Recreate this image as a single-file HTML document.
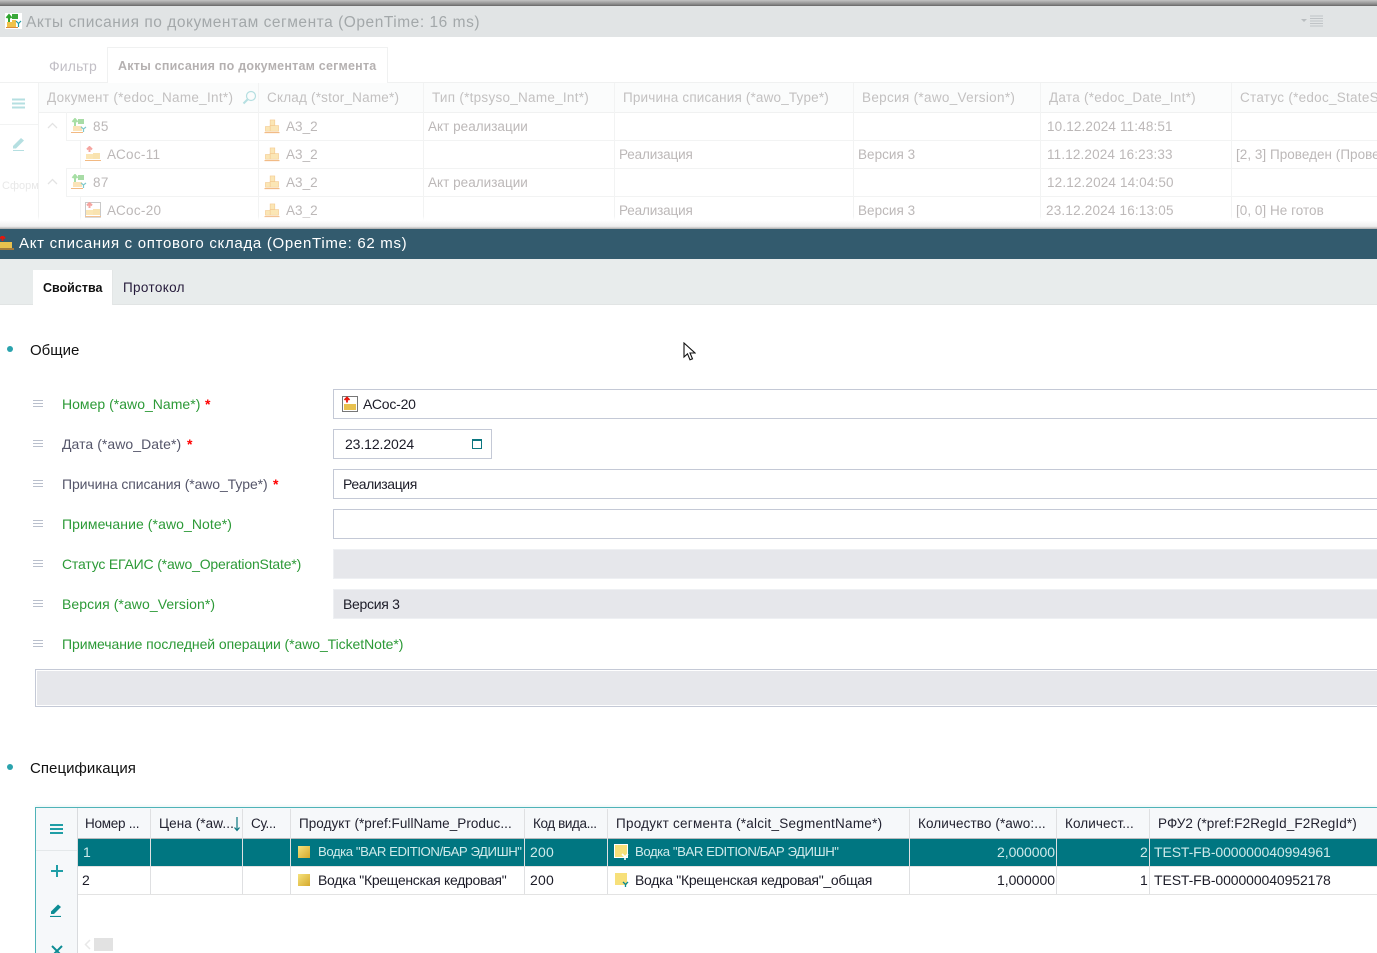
<!DOCTYPE html>
<html lang="ru"><head><meta charset="utf-8"><title>Акт списания</title>
<style>
html,body{margin:0;padding:0;background:#fff}
#p{position:relative;width:1377px;height:953px;overflow:hidden;background:#fff;font-family:"Liberation Sans","DejaVu Sans",sans-serif;font-size:14px;color:#1c1c28}
#p div,#p svg{position:absolute}
.t{white-space:nowrap;line-height:18px;height:18px}
.f{color:#bcb8b8;font-size:13.5px;letter-spacing:.03px}
.fh{color:#c3c1c1;font-size:13.5px;letter-spacing:.27px}
.l{font-size:14px}
.g{color:#2c9a37}.d{color:#55566a}
.s{color:#f00;font-weight:bold;font-size:14px}
.v{border:1px solid #c4c9d6;height:28px;left:333px;width:1060px;box-sizing:content-box}
.h{font-size:13.5px;letter-spacing:.1px;color:#222230}
.c{font-size:14px;letter-spacing:-.3px}
.w{color:#cfeaea}
.hl{background:#b9bfcc;left:33px;width:10px;height:1px}
</style></head><body><div id="p">
<svg width="0" height="0"><defs>
<symbol id="wh" viewBox="0 0 16 16"><rect x="6" y="1" width="5" height="6" fill="#fbe6b5" stroke="#f3c78c" stroke-width=".6"/><rect x="6" y="7" width="9" height="6" fill="#fbe6b5" stroke="#f3c78c" stroke-width=".6"/><rect x="1" y="8" width="5" height="5" fill="#fbe6b5" stroke="#f3c78c" stroke-width=".6"/><path d="M0 14.5H16" stroke="#f2b982" stroke-width="1.2"/></symbol>
<symbol id="doc" viewBox="0 0 16 16"><path d="M4 1v7M1.5 4 4 1l2.500 3" stroke="#a7dfa5" stroke-width="2" fill="none"/><rect x="7" y="1" width="6" height="5" fill="#a8dca6"/><rect x="2" y="8" width="9" height="5" fill="#fbe3b8"/><path d="M0 14.500H12" stroke="#f2b982"/><path d="M10 9l2.500 2 2.500-2M12.500 11v3" stroke="#7fc9cc" stroke-width="1.200" fill="none"/></symbol>
<symbol id="out" viewBox="0 0 16 16"><path d="M4.500 1v5M2 3.500 4.500 1 7 3.500" stroke="#f5a5a0" stroke-width="2" fill="none"/><rect x="1" y="8" width="7" height="5" fill="#fbe6b5"/><rect x="8" y="7" width="7" height="6" fill="#f9e3b0"/><path d="M0 14.500H16" stroke="#f2b982"/></symbol>
</defs></svg>

<!-- background top window -->
<div style="left:0;top:0;width:1377px;height:6px;background:linear-gradient(#c4c4c4,#8a8a8a 70%,#666)"></div>
<div style="left:0;top:6px;width:1377px;height:31px;background:#e1e4e5"></div>
<svg style="left:5px;top:13px" width="17" height="16" viewBox="0 0 17 16"><rect width="17" height="16" fill="#fff"/><path d="M4 2v8M1.500 5 4 2l2.500 3" stroke="#2fa52f" stroke-width="2" fill="none"/><rect x="7" y="1" width="6" height="5" fill="#3aa83a"/><rect x="2" y="9" width="5" height="5" fill="#f0c24a"/><rect x="7" y="7" width="4" height="7" fill="#f0c24a"/><path d="M1 14.500H13" stroke="#d98a3b"/><path d="M11 8l2.500 2.500L16 8M13.500 10v4" stroke="#1c9aa0" stroke-width="1.200" fill="none"/></svg>
<div class="t" style="left:26px;top:14px;font-size:15.500px;letter-spacing:.53px;color:#a3a8aa">Акты списания по документам сегмента (OpenTime: 16 ms)</div>
<svg style="left:1300px;top:15px" width="24" height="12"><path d="M1 4h6L4 7z" fill="#b9bdc0"/><path d="M10 1h13M10 3.500h13M10 6h13M10 8.500h13M10 11h13" stroke="#bfc3c6"/></svg>

<div style="left:107px;top:47px;width:279px;height:35px;border:1px solid #f0f1f1;border-bottom:0;background:#fff"></div>
<div style="left:0;top:82px;width:107px;height:1px;background:#f0f1f1"></div>
<div style="left:387px;top:82px;width:990px;height:1px;background:#f0f1f1"></div>
<div class="t" style="left:49px;top:56.500px;color:#c2bfc6;font-size:14px;letter-spacing:.15px">Фильтр</div>
<div class="t" style="left:118px;top:56.500px;color:#b5b1b1;font-weight:bold;font-size:12.500px;letter-spacing:.22px">Акты списания по документам сегмента</div>

<div style="left:38px;top:83px;width:1339px;height:29px;background:#fbfcfc;border-bottom:1px solid #f0f1f1"></div>
<div style="left:38px;top:83px;width:1px;height:146px;background:#f2f3f3"></div>
<div style="left:258px;top:83px;width:1px;height:146px;background:#f2f3f3"></div>
<div style="left:423px;top:83px;width:1px;height:146px;background:#f2f3f3"></div>
<div style="left:614px;top:83px;width:1px;height:146px;background:#f2f3f3"></div>
<div style="left:853px;top:83px;width:1px;height:146px;background:#f2f3f3"></div>
<div style="left:1040px;top:83px;width:1px;height:146px;background:#f2f3f3"></div>
<div style="left:1231px;top:83px;width:1px;height:146px;background:#f2f3f3"></div>
<div style="left:66px;top:140px;width:1311px;height:1px;background:#f2f3f3"></div>
<div style="left:66px;top:168px;width:1311px;height:1px;background:#f2f3f3"></div>
<div style="left:66px;top:196px;width:1311px;height:1px;background:#f2f3f3"></div>
<div style="left:66px;top:224px;width:1311px;height:1px;background:#f2f3f3"></div>
<div style="left:66px;top:112px;width:1px;height:28px;background:#f2f3f3"></div>
<div style="left:66px;top:168px;width:1px;height:28px;background:#f2f3f3"></div>
<div style="left:80px;top:140px;width:1px;height:28px;background:#f2f3f3"></div>
<div style="left:80px;top:196px;width:1px;height:28px;background:#f2f3f3"></div>
<div style="left:0;top:124px;width:38px;height:1px;background:#f2f3f3"></div>

<svg style="left:12px;top:98px" width="13" height="11"><path d="M0 1.500h13M0 5.500h13M0 9.500h13" stroke="#b5dfe1" stroke-width="2"/></svg>
<svg style="left:12px;top:136px" width="14" height="15"><path d="M1 10 9 2l3 2.500-8 8H1z" fill="#b5dfe1"/><path d="M1 14.500h11" stroke="#b5dfe1"/></svg>
<div class="t" style="left:2px;top:177px;color:#e8e8e8;font-size:11px">Сформ</div>
<div class="t" style="left:2px;top:218px;color:#e2e2e2;font-size:11px">Отыени</div>

<div class="t fh" style="left:47px;top:88.500px;letter-spacing:.3px">Документ (*edoc_Name_Int*)</div>
<svg style="left:242px;top:90px" width="15" height="15" fill="none"><circle cx="9" cy="6" r="4.500" stroke="#b5dfe1" stroke-width="1.200"/><path d="M5.500 9.500 1.500 13.500" stroke="#b5dfe1" stroke-width="2"/></svg>
<div class="t fh" style="left:267px;top:88.500px;letter-spacing:.2px">Склад (*stor_Name*)</div>
<div class="t fh" style="left:432px;top:88.500px">Тип (*tpsyso_Name_Int*)</div>
<div class="t fh" style="left:623px;top:88.500px;letter-spacing:.17px">Причина списания (*awo_Type*)</div>
<div class="t fh" style="left:862px;top:88.500px;letter-spacing:.32px">Версия (*awo_Version*)</div>
<div class="t fh" style="left:1049px;top:88.500px">Дата (*edoc_Date_Int*)</div>
<div class="t fh" style="left:1240px;top:88.500px">Статус (*edoc_StateS</div>

<svg style="left:47px;top:122px" width="11" height="7" fill="none"><path d="M1 6l4.500-4.500L10 6" stroke="#e3e3e3" stroke-width="1.300"/></svg>
<svg style="left:47px;top:178px" width="11" height="7" fill="none"><path d="M1 6l4.500-4.500L10 6" stroke="#e3e3e3" stroke-width="1.300"/></svg>
<svg style="left:71px;top:118px" width="16" height="16"><use href="#doc"/></svg>
<svg style="left:71px;top:174px" width="16" height="16"><use href="#doc"/></svg>
<svg style="left:85px;top:146px" width="16" height="16"><use href="#out"/></svg>
<svg style="left:85px;top:202px" width="16" height="16"><rect x=".5" y=".5" width="15" height="15" fill="#fff" stroke="#c9c9c9"/><use href="#out"/></svg>
<div class="t f" style="left:93px;top:117.500px;letter-spacing:.4px">85</div>
<div class="t f" style="left:107px;top:145.500px;letter-spacing:.3px">АСос-11</div>
<div class="t f" style="left:93px;top:173.500px;letter-spacing:.4px">87</div>
<div class="t f" style="left:107px;top:201.500px;letter-spacing:.3px">АСос-20</div>
<svg style="left:264px;top:119px" width="16" height="15"><use href="#wh"/></svg><div class="t f" style="left:286px;top:117.500px">А3_2</div>
<svg style="left:264px;top:147px" width="16" height="15"><use href="#wh"/></svg><div class="t f" style="left:286px;top:145.500px">А3_2</div>
<svg style="left:264px;top:175px" width="16" height="15"><use href="#wh"/></svg><div class="t f" style="left:286px;top:173.500px">А3_2</div>
<svg style="left:264px;top:203px" width="16" height="15"><use href="#wh"/></svg><div class="t f" style="left:286px;top:201.500px">А3_2</div>
<div class="t f" style="left:428px;top:117.500px">Акт реализации</div>
<div class="t f" style="left:428px;top:173.500px">Акт реализации</div>
<div class="t f" style="left:619px;top:145.500px;letter-spacing:-.15px">Реализация</div>
<div class="t f" style="left:619px;top:201.500px;letter-spacing:-.15px">Реализация</div>
<div class="t f" style="left:858px;top:145.500px">Версия 3</div>
<div class="t f" style="left:858px;top:201.500px">Версия 3</div>
<div class="t f" style="left:1047px;top:117.500px;letter-spacing:.15px">10.12.2024 11:48:51</div>
<div class="t f" style="left:1047px;top:145.500px;letter-spacing:.15px">11.12.2024 16:23:33</div>
<div class="t f" style="left:1047px;top:173.500px;letter-spacing:.15px">12.12.2024 14:04:50</div>
<div class="t f" style="left:1046px;top:201.500px;letter-spacing:.2px">23.12.2024 16:13:05</div>
<div class="t f" style="left:1236px;top:145.500px">[2, 3] Проведен (Прове</div>
<div class="t f" style="left:1236px;top:201.500px">[0, 0] Не готов</div>

<div style="left:0;top:216px;width:1377px;height:13px;background:linear-gradient(rgba(255,255,255,0),#fff 35%,#eee 80%,#aaa)"></div>

<!-- active window -->
<div style="left:0;top:229px;width:1377px;height:30px;background:#335b6e"></div>
<svg style="left:0;top:236px" width="14" height="14"><path d="M2.500 0v5M0 2.500 2.500 0 5 2.500" stroke="#e8160c" stroke-width="1.800" fill="none"/><rect x="0" y="6" width="12" height="6" fill="#e8c14e"/><path d="M0 13h14" stroke="#c9862c" stroke-width="1.500"/></svg>
<div class="t" style="left:19px;top:235px;font-size:15px;letter-spacing:.7px;color:#fff">Акт списания с оптового склада (OpenTime: 62 ms)</div>

<div style="left:0;top:259px;width:1377px;height:45px;background:#e8ecec;border-bottom:1px solid #e1e4e4"></div>
<div style="left:33px;top:270px;width:79px;height:35px;background:#fff;border-right:1px solid #e3e6e6"></div>
<div class="t" style="left:43px;top:278.500px;font-weight:bold;font-size:12.500px;color:#111">Свойства</div>
<div class="t" style="left:123px;top:278.500px;font-size:13.500px;letter-spacing:.35px;color:#251a3a">Протокол</div>

<svg style="left:683px;top:342px" width="13" height="20"><path d="M1 1v14l3.500-3.200 2.500 6 2.500-1-2.500-5.800H12z" fill="#fff" stroke="#111" stroke-width="1.100"/></svg>

<div style="left:7px;top:346px;width:6px;height:6px;border-radius:50%;background:#2aa3ad"></div>
<div class="t" style="left:30px;top:342px;font-size:15px;color:#111">Общие</div>

<!-- drag handles -->
<div class="hl" style="top:400px"></div><div class="hl" style="top:403px"></div><div class="hl" style="top:406px"></div>
<div class="hl" style="top:440px"></div><div class="hl" style="top:443px"></div><div class="hl" style="top:446px"></div>
<div class="hl" style="top:480px"></div><div class="hl" style="top:483px"></div><div class="hl" style="top:486px"></div>
<div class="hl" style="top:520px"></div><div class="hl" style="top:523px"></div><div class="hl" style="top:526px"></div>
<div class="hl" style="top:560px"></div><div class="hl" style="top:563px"></div><div class="hl" style="top:566px"></div>
<div class="hl" style="top:600px"></div><div class="hl" style="top:603px"></div><div class="hl" style="top:606px"></div>
<div class="hl" style="top:640px"></div><div class="hl" style="top:643px"></div><div class="hl" style="top:646px"></div>

<div class="t l g" style="left:62px;top:395px;letter-spacing:.02px">Номер (*awo_Name*)</div><div class="t s" style="left:205px;top:395px">*</div>
<div class="t l d" style="left:62px;top:435px;letter-spacing:.06px">Дата (*awo_Date*)</div><div class="t s" style="left:187px;top:435px">*</div>
<div class="t l d" style="left:62px;top:475px;letter-spacing:-.1px">Причина списания (*awo_Type*)</div><div class="t s" style="left:273px;top:475px">*</div>
<div class="t l g" style="left:62px;top:515px;letter-spacing:.08px">Примечание (*awo_Note*)</div>
<div class="t l g" style="left:62px;top:555px;letter-spacing:-.18px">Статус ЕГАИС (*awo_OperationState*)</div>
<div class="t l g" style="left:62px;top:595px;letter-spacing:.07px">Версия (*awo_Version*)</div>
<div class="t l g" style="left:62px;top:635px;letter-spacing:-.07px">Примечание последней операции (*awo_TicketNote*)</div>

<div class="v" style="top:389px"></div>
<svg style="left:342px;top:396px" width="16" height="16"><rect x=".5" y=".5" width="15" height="15" fill="#fff" stroke="#777"/><path d="M5 1.500v5M2.500 4 5 1.500 7.500 4" stroke="#e8160c" stroke-width="1.800" fill="none"/><rect x="2" y="8" width="12" height="6" fill="#e8c14e"/></svg>
<div class="t c" style="left:363px;top:395px;letter-spacing:-.2px">АСос-20</div>
<div class="v" style="top:429px;width:157px"></div>
<div class="t c" style="left:345px;top:435px;letter-spacing:-.1px">23.12.2024</div>
<div style="left:472px;top:439px;width:8px;height:7px;border:1px solid #0b7680;border-top-width:2px"></div>
<div class="v" style="top:469px"></div>
<div class="t c" style="left:343px;top:475px;letter-spacing:-.4px">Реализация</div>
<div class="v" style="top:509px"></div>
<div class="v" style="top:549px;background:#e6e7eb;border-color:#eef0f3"></div>
<div class="v" style="top:589px;background:#e6e7eb;border-color:#eef0f3"></div>
<div class="t c" style="left:343px;top:595px">Версия 3</div>
<div style="left:35px;top:669px;width:1360px;height:36px;border:1px solid #c4c9d6;background:#e6e7eb;box-shadow:inset 0 0 0 1px #fff"></div>

<div style="left:7px;top:764px;width:6px;height:6px;border-radius:50%;background:#2aa3ad"></div>
<div class="t" style="left:30px;top:760px;font-size:15px;letter-spacing:.05px;color:#111">Спецификация</div>

<!-- spec grid -->
<div style="left:35px;top:807px;width:1342px;height:1px;background:#4fb3b8;box-shadow:0 -1px 2px #d5eeee"></div>
<div style="left:35px;top:807px;width:1px;height:146px;background:#4fb3b8"></div>
<div style="left:36px;top:808px;width:41px;height:145px;background:#f6f8fa;border-right:1px solid #d9dbde"></div>
<div style="left:36px;top:850px;width:41px;height:1px;background:#e4e8ea"></div>
<svg style="left:50px;top:824px" width="13" height="10"><path d="M0 1h13M0 5h13M0 9h13" stroke="#1f9ea6" stroke-width="2"/></svg>
<svg style="left:51px;top:865px" width="12" height="12"><path d="M6 0v12M0 6h12" stroke="#1f9ea6" stroke-width="2"/></svg>
<svg style="left:50px;top:902px" width="13" height="15"><path d="M1 9.500 8 2.500l3 2.500-7 7H1z" fill="#0d8c94"/><path d="M0 14.500h11" stroke="#0d8c94" stroke-width="1.200"/></svg>
<svg style="left:51px;top:945px" width="12" height="8"><path d="M1 1l10 10M11 1 1 11" stroke="#0d8c94" stroke-width="2"/></svg>

<div style="left:78px;top:808px;width:1299px;height:30px;background:#f6f8fa;border-bottom:1px solid #b8babc"></div>
<div style="left:78px;top:839px;width:1299px;height:27px;background:#007681"></div>
<div style="left:78px;top:866px;width:1299px;height:1px;background:#e3e3e3"></div>
<div style="left:78px;top:894px;width:1299px;height:1px;background:#e3e3e3"></div>
<div style="left:150px;top:809px;width:1px;height:85px;background:#dfe0e2"></div>
<div style="left:242px;top:809px;width:1px;height:85px;background:#dfe0e2"></div>
<div style="left:290px;top:809px;width:1px;height:85px;background:#dfe0e2"></div>
<div style="left:524px;top:809px;width:1px;height:85px;background:#dfe0e2"></div>
<div style="left:607px;top:809px;width:1px;height:85px;background:#dfe0e2"></div>
<div style="left:909px;top:809px;width:1px;height:85px;background:#dfe0e2"></div>
<div style="left:1056px;top:809px;width:1px;height:85px;background:#dfe0e2"></div>
<div style="left:1149px;top:809px;width:1px;height:85px;background:#dfe0e2"></div>

<div class="t h" style="left:85px;top:815px;letter-spacing:-.25px">Номер ...</div>
<div class="t h" style="left:159px;top:815px">Цена (*aw...</div>
<svg style="left:233px;top:817px" width="8" height="15" fill="none"><path d="M4 0v13M1.500 10.500 4 13.500l2.500-3" stroke="#0b7680" stroke-width="1.200"/></svg>
<div class="t h" style="left:251px;top:815px;letter-spacing:-.3px">Су...</div>
<div class="t h" style="left:299px;top:815px;letter-spacing:.05px">Продукт (*pref:FullName_Produc...</div>
<div class="t h" style="left:533px;top:815px;letter-spacing:-.4px">Код вида...</div>
<div class="t h" style="left:616px;top:815px;letter-spacing:.25px">Продукт сегмента (*alcit_SegmentName*)</div>
<div class="t h" style="left:918px;top:815px">Количество (*awo:...</div>
<div class="t h" style="left:1065px;top:815px">Количест...</div>
<div class="t h" style="left:1158px;top:815px">РФУ2 (*pref:F2RegId_F2RegId*)</div>

<div class="t c w" style="left:83px;top:843px">1</div>
<div class="t c" style="left:82px;top:871px">2</div>
<div style="left:298px;top:846px;width:12px;height:12px;background:linear-gradient(135deg,#f6e27c,#d5a92c)"></div>
<div style="left:298px;top:874px;width:12px;height:12px;background:linear-gradient(135deg,#f6e27c,#d5a92c)"></div>
<div class="t c w" style="left:318px;top:843px;font-size:13.200px;letter-spacing:-.45px">Водка "BAR EDITION/БАР ЭДИШН"</div>
<div class="t c" style="left:318px;top:871px">Водка "Крещенская кедровая"</div>
<div class="t c w" style="left:530px;top:843px;letter-spacing:.2px">200</div>
<div class="t c" style="left:530px;top:871px;letter-spacing:.2px">200</div>
<svg style="left:614px;top:844px" width="17" height="17"><rect x=".5" y=".5" width="13" height="13" fill="#f7e07a" stroke="#fff"/><path d="M8 10l3 3 3-3M11 13v3" stroke="#fff" stroke-width="1.600" fill="none"/></svg>
<svg style="left:615px;top:873px" width="15" height="15"><rect width="12" height="12" fill="#f7e07a"/><path d="M8 9l2.500 2.500L13 9M10.500 11v3" stroke="#0b8a92" stroke-width="1.300" fill="none"/></svg>
<div class="t c w" style="left:635px;top:843px;font-size:13.200px;letter-spacing:-.45px">Водка "BAR EDITION/БАР ЭДИШН"</div>
<div class="t c" style="left:635px;top:871px">Водка "Крещенская кедровая"_общая</div>
<div class="t c w" style="left:997px;top:843px;letter-spacing:-.05px">2,000000</div>
<div class="t c" style="left:997px;top:871px;letter-spacing:-.05px">1,000000</div>
<div class="t c w" style="left:1140px;top:843px">2</div>
<div class="t c" style="left:1140px;top:871px">1</div>
<div class="t c w" style="left:1154px;top:843px;letter-spacing:-.1px">TEST-FB-000000040994961</div>
<div class="t c" style="left:1154px;top:871px;letter-spacing:-.1px">TEST-FB-000000040952178</div>

<svg style="left:84px;top:939px" width="7" height="11" fill="none"><path d="M6 1 1.500 5.500 6 10" stroke="#e8e8e8" stroke-width="1.500"/></svg>
<div style="left:94px;top:938px;width:19px;height:13px;background:#e2e2e2"></div>
</div></body></html>
